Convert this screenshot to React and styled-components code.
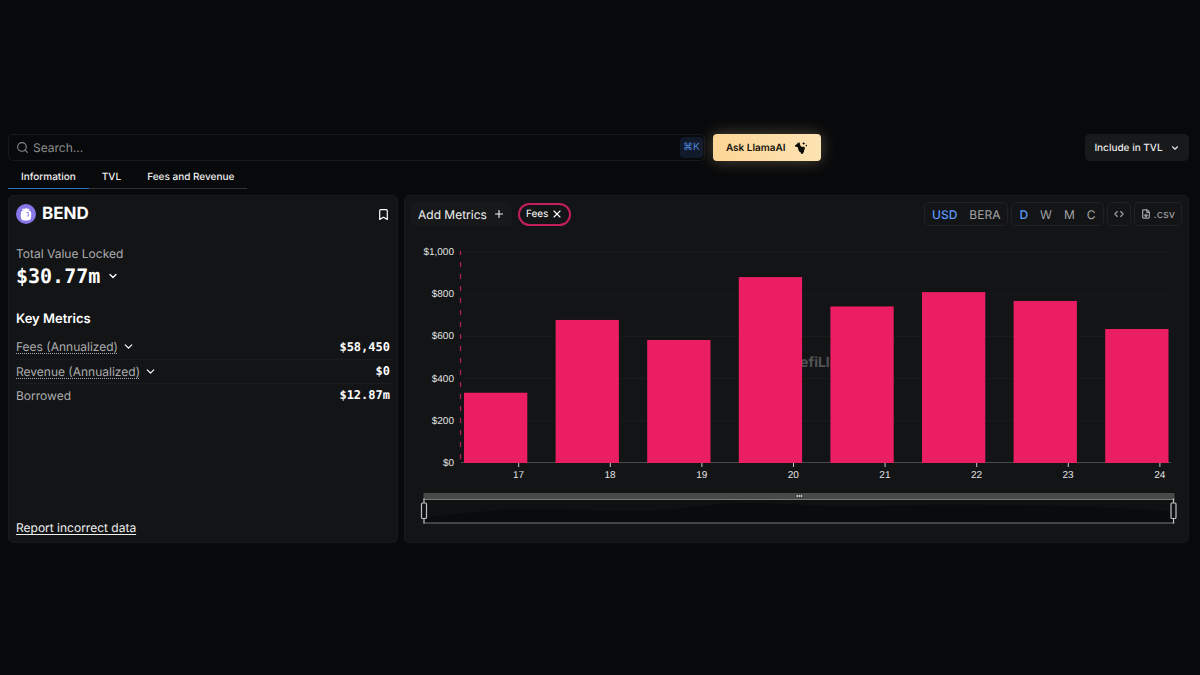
import React from "react";
import styled, { createGlobalStyle, css } from "styled-components";
import { Search, ChevronDown, Bookmark, Plus, X, Code, FileDown } from "lucide-react";

const bars = [
  { day: 17, value: 333 },
  { day: 18, value: 678 },
  { day: 19, value: 583 },
  { day: 20, value: 881 },
  { day: 21, value: 742 },
  { day: 22, value: 810 },
  { day: 23, value: 768 },
  { day: 24, value: 635 },
];
const yTicks = [0, 200, 400, 600, 800, 1000];

// plot area inside the svg
const LEFT = 56;
const BOTTOM = 228;
const PLOT_H = 211;
const STEP = 91.6;
const yOf = (v) => BOTTOM - (v / 1000) * PLOT_H;

const metrics = [
  { name: "Fees (Annualized)", value: "$58,450", more: true },
  { name: "Revenue (Annualized)", value: "$0", more: true },
  { name: "Borrowed", value: "$12.87m", more: false },
];

const LlamaIcon = () => (
  <svg width="14" height="14" viewBox="0 0 14 14" fill="#0d0b06" aria-hidden="true">
    <path d="M1 4.300 3.200 3 3.700 1.200 4.500 2.200 5.500 1.100 5.900 3.100C6.300 4.500 6.700 5.600 7.700 5.800 8.800 5.900 9.600 5.300 10.400 5.900 11.200 6.500 11 8.200 10.200 9L9.900 11 8.400 12.900 6.800 12.800 7.100 11.700C5.400 11.200 4.500 9.900 4.200 8.100L3.700 5.900 1.400 5.700Z" />
    <path d="m9.700.7.5 1.200 1.200.5-1.200.5-.5 1.200-.5-1.200-1.200-.5 1.200-.5Z" />
    <circle cx="12.300" cy="4.600" r=".8" />
  </svg>
);

const BendLogo = () => (
  <svg width="20" height="20" viewBox="0 0 20 20" aria-hidden="true">
    <circle cx="10" cy="10" r="10" fill="#8676e8" />
    <path
      d="M9.100 4.200h1.800v1.700c2.500.1 4.200.9 4.300 3.200v3.400c0 2.600-1.400 3.900-3.400 3.900H8.200c-2 0-3.400-1.300-3.400-3.900V9.100c.1-2.300 1.800-3.100 4.300-3.200Z"
      fill="#fff"
    />
    <path d="M6.200 5.400H13.300" stroke="#fff" strokeWidth="1.200" />
    <path d="M10.200 8.400h2.200v3.600h-1.600" fill="none" stroke="#8676e8" strokeWidth=".8" />
  </svg>
);

const FeesChart = () => (
  <Chart viewBox="0 0 783 300" role="img" aria-label="Fees per day">
    {yTicks.slice(1).map((t) => (
      <line key={t} x1={LEFT} x2="766" y1={yOf(t)} y2={yOf(t)} stroke="#1a1c1d" />
    ))}
    <text x="385" y="132" fill="#525355" fontFamily="Inter" fontSize="14" fontWeight="700">DefiLlama</text>
    <line x1={LEFT} x2="766" y1={BOTTOM - 0.5} y2={BOTTOM - 0.5} stroke="#47494b" />
    <line x1="55.500" x2="55.500" y1="16" y2={BOTTOM} stroke="#b02050" strokeWidth="1.300" strokeDasharray="5 7" strokeDashoffset="1" />
    {bars.map((b, i) => (
      <g key={b.day}>
        <rect x={59 + i * STEP} width="63.300" y={yOf(b.value)} height={BOTTOM - yOf(b.value)} fill="#ec1e63" />
        <line x1={113.7 + i * STEP} x2={113.7 + i * STEP} y1={BOTTOM} y2={BOTTOM + 4} stroke="#c9cacb" />
        <AxisText x={113.5 + i * STEP} y="243" textAnchor="middle">{b.day}</AxisText>
      </g>
    ))}
    {yTicks.map((t) => (
      <AxisText key={t} x="49" y={yOf(t) + 3} textAnchor="end">${t.toLocaleString("en-US")}</AxisText>
    ))}

    {/* zoom slider */}
    <rect x="18.500" y="258" width="751" height="7" fill="#484949" />
    <rect x="18.500" y="265" width="751" height="23" fill="#0e1011" />
    <path d="M19 283 C55 279 90 274 128 274 S200 277 240 276 S310 267 350 268 S430 273 480 271 S600 270 650 271 S730 275 769 276 V288 H19Z" fill="#0a0b0d" />
    <path d="M18.500 264.500H769.500M18.500 288H769.500" stroke="#777879" />
    <path d="M391.700 261h1.200M393.700 261h1.200M395.700 261h1.200" stroke="#d5d5d5" strokeWidth="2" />
    {[19, 768.5].map((x) => (
      <g key={x} stroke="#bfc0c1" strokeWidth="1.200">
        <path d={`M${x} 263.500v5M${x} 283.500v5`} />
        <rect x={x - 2.5} y="268" width="5" height="15.500" rx="1" fill="#0e1011" />
      </g>
    ))}
  </Chart>
);

const App = () => {
  const [currency, setCurrency] = React.useState("USD");
  const [period, setPeriod] = React.useState("D");
  return (
    <Page>
      <GlobalStyle />
      <TopBar>
        <SearchBox>
          <Search size={13} strokeWidth={2} />
          <SearchInput type="text" placeholder="Search..." aria-label="Search" />
          <Shortcut>⌘K</Shortcut>
        </SearchBox>
        <AskButton type="button">Ask LlamaAI <LlamaIcon /></AskButton>
        <IncludeButton type="button">Include in TVL <ChevronDown size={10} strokeWidth={2.6} /></IncludeButton>
      </TopBar>

      <Tabs>
        <Tab href="#information" $active>Information</Tab>
        <Tab href="#tvl">TVL</Tab>
        <Tab href="#fees">Fees and Revenue</Tab>
      </Tabs>

      <Columns>
        <InfoCard>
          <Heading>
            <BendLogo />
            <Name>BEND</Name>
            <IconButton type="button" aria-label="Bookmark"><Bookmark size={13} strokeWidth={2.2} /></IconButton>
          </Heading>
          <Label>Total Value Locked</Label>
          <Total>
            $30.77m
            <IconButton type="button" aria-label="Show breakdown"><ChevronDown size={12} strokeWidth={2.6} /></IconButton>
          </Total>
          <SubTitle>Key Metrics</SubTitle>
          <MetricTable>
            <tbody>
              {metrics.map((m) => (
                <tr key={m.name}>
                  <MetricName scope="row">
                    <MetricLabel>
                      <Term $dotted={m.more}>{m.name}</Term>
                      {m.more && <IconButton type="button" aria-label={`Expand ${m.name}`}><ChevronDown size={13} strokeWidth={2.2} /></IconButton>}
                    </MetricLabel>
                  </MetricName>
                  <MetricValue>{m.value}</MetricValue>
                </tr>
              ))}
            </tbody>
          </MetricTable>
          <Report href="#report">Report incorrect data</Report>
        </InfoCard>

        <ChartCard>
          <Toolbar>
            <AddButton type="button">Add Metrics <Plus size={12} strokeWidth={2.2} /></AddButton>
            <Pill type="button">Fees <X size={12} strokeWidth={2.2} /></Pill>
            <Tools>
              <Group>
                {["USD", "BERA"].map((c) => (
                  <Option key={c} type="button" $on={currency === c} onClick={() => setCurrency(c)}>{c}</Option>
                ))}
              </Group>
              <Group>
                {["D", "W", "M", "C"].map((p) => (
                  <Option key={p} type="button" $on={period === p} onClick={() => setPeriod(p)}>{p}</Option>
                ))}
              </Group>
              <ToolButton type="button" aria-label="Embed"><Code size={10} strokeWidth={2.6} /></ToolButton>
              <ToolButton type="button"><FileDown size={10} strokeWidth={3} /> .csv</ToolButton>
            </Tools>
          </Toolbar>
          <FeesChart />
        </ChartCard>
      </Columns>
    </Page>
  );
};

const GlobalStyle = createGlobalStyle`
  * {
    box-sizing: border-box;
  }
  body {
    margin: 0;
    background-color: #08090b;
    color: #fff;
    font-family: Inter, "Liberation Sans", sans-serif;
    font-size: 12px;
    text-rendering: geometricPrecision;
  }
  button, input {
    font: inherit;
    color: inherit;
    margin: 0;
    padding: 0;
    border: 0;
    background: none;
    text-rendering: inherit;
  }
  button {
    cursor: pointer;
  }
`;

const Page = styled.main`
  min-height: 100vh;
  padding: 134px 11px 20px 8px;
`;

const TopBar = styled.header`
  display: flex;
  align-items: center;
  gap: 8px;
`;

const SearchBox = styled.div`
  display: flex;
  align-items: center;
  gap: 4px;
  width: 59%;
  height: 27px;
  padding: 0 1px 0 7px;
  border: 1px solid #17181b;
  border-radius: 5px;
  color: #8b8c8e;
`;

const SearchInput = styled.input`
  flex: 1;
  min-width: 0;
  outline: none;
  &::placeholder {
    color: #8b8c8e;
    opacity: 1;
  }
`;

const Shortcut = styled.kbd`
  padding: 0 3px;
  border-radius: 4px;
  background-color: #101a2b;
  color: #4f86d8;
  font-family: Inter, "DejaVu Sans", sans-serif;
  font-size: 10px;
  line-height: 21px;
`;

const AskButton = styled.button`
  display: flex;
  align-items: center;
  justify-content: center;
  gap: 8px;
  width: 108px;
  height: 27px;
  border-radius: 4px;
  background: linear-gradient(90deg, #fcd696, #fde3b3);
  box-shadow: 0 0 16px rgba(253, 224, 169, 0.3);
  color: #16130c;
  font-size: 10px;
  font-weight: 600;
`;

const IncludeButton = styled.button`
  display: flex;
  align-items: center;
  justify-content: center;
  gap: 7px;
  width: 104px;
  height: 27px;
  margin-left: auto;
  border-radius: 5px;
  background-color: #18191b;
  color: #e8e8e9;
  font-size: 10px;
  font-weight: 500;
`;

const Tabs = styled.nav`
  display: flex;
  width: max-content;
  margin: 5px 0 6px;
`;

const Tab = styled.a`
  padding: 0 13px;
  border-bottom: 1px solid ${(props) => (props.$active ? "#2f6fca" : "#303134")};
  color: #f0f0f1;
  font-size: 10px;
  font-weight: 500;
  line-height: 22px;
  text-decoration: none;
`;

const Columns = styled.div`
  display: grid;
  grid-template-columns: 390px minmax(0, 1fr);
  gap: 6px;
`;

const card = css`
  display: flex;
  flex-direction: column;
  border: 1px solid #18191c;
  border-radius: 5px;
  background-color: #131416;
`;

const InfoCard = styled.section`
  ${card}
  padding: 7px 7px 6px;
`;

const ChartCard = styled.section`
  ${card}
  padding: 6px 0 7px;
`;

const Heading = styled.div`
  display: flex;
  align-items: center;
  gap: 6px;
  height: 22px;
  & > button {
    margin-left: auto;
  }
`;

const Name = styled.h1`
  margin: 0;
  font-size: 17px;
  font-weight: 700;
`;

const IconButton = styled.button`
  display: flex;
`;

const Label = styled.div`
  margin-top: 20px;
  color: #acadaf;
  line-height: 18px;
`;

const Total = styled.div`
  display: flex;
  align-items: center;
  gap: 7px;
  font-family: "DejaVu Sans Mono", monospace;
  font-size: 20px;
  font-weight: 700;
  line-height: 26px;
`;

const SubTitle = styled.h2`
  margin: 21px 0 7px;
  font-size: 13px;
  font-weight: 600;
  line-height: 18px;
`;

const MetricTable = styled.table`
  width: 100%;
  border-collapse: collapse;
  tr + tr {
    border-top: 1px solid #1b1c1e;
  }
`;

const MetricName = styled.th`
  height: 24px;
  padding: 0;
  font-weight: 400;
`;

const MetricLabel = styled.div`
  display: flex;
  align-items: center;
  gap: 4px;
`;

const Term = styled.span`
  color: #acadaf;
  ${(props) => props.$dotted && css`
    text-decoration: underline dotted #acadaf;
    text-underline-offset: 2px;
  `}
`;

const MetricValue = styled.td`
  padding: 0;
  font-family: "DejaVu Sans Mono", monospace;
  font-weight: 700;
  text-align: right;
`;

const Report = styled.a`
  align-self: flex-start;
  margin-top: auto;
  color: #f0f0f1;
  line-height: 16px;
  text-underline-offset: 2px;
`;

const Toolbar = styled.div`
  display: flex;
  align-items: center;
  gap: 6px;
  height: 24px;
  padding: 0 6px;
  margin-bottom: 9px;
`;

const AddButton = styled.button`
  display: flex;
  align-items: center;
  gap: 6px;
  height: 24px;
  padding: 0 7px;
  border-radius: 5px;
  background-color: #17181a;
  color: #f0f0f1;
`;

const Pill = styled.button`
  display: flex;
  align-items: center;
  gap: 3px;
  height: 23px;
  padding: 0 6px;
  border: 2px solid #c41f58;
  border-radius: 12px;
  font-size: 10px;
`;

const Tools = styled.div`
  display: flex;
  gap: 3px;
  margin-left: auto;
`;

const Group = styled.div`
  display: flex;
  height: 24px;
  padding: 0 1px;
  border: 1px solid #202124;
  border-radius: 5px;
`;

const Option = styled.button`
  padding: 0 6px;
  color: ${(props) => (props.$on ? "#5c9bfa" : "#a3a4a6")};
  font-weight: ${(props) => (props.$on ? 500 : 400)};
`;

const ToolButton = styled.button`
  display: flex;
  align-items: center;
  gap: 3px;
  height: 24px;
  padding: 0 6px;
  border: 1px solid #202124;
  border-radius: 5px;
  color: #a3a4a6;
  font-size: 11px;
`;

const Chart = styled.svg`
  display: block;
  width: 100%;
`;

const AxisText = styled.text`
  fill: #e2e3e4;
  font-family: "Liberation Sans", Arial, sans-serif;
  font-size: 10px;
`;

export default App;
